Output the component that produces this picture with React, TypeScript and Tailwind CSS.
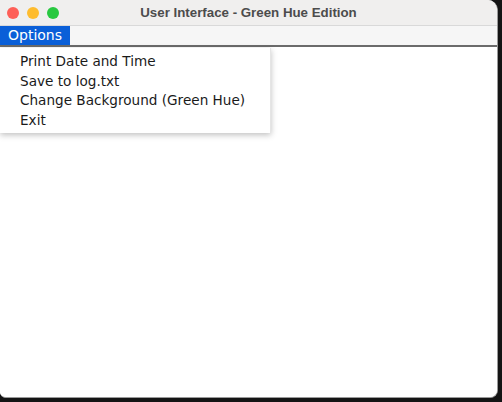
import React from "react";

const items = [
  "Print Date and Time",
  "Save to log.txt",
  "Change Background (Green Hue)",
  "Exit",
];

export default function App() {
  return (
    <div className="w-[502px] h-[402px] bg-[#141414] overflow-hidden">
      <div className="relative w-[498px] h-[398px] bg-white rounded-tr-[10px] rounded-br-[8px] rounded-bl-[6px] overflow-hidden border-r border-b border-[#9a9a9a] flex flex-col">
        {/* title bar */}
        <div className="h-[26px] bg-[#f0efee] border-b border-[#d9d9d9] flex items-center relative shrink-0">
          <div className="flex gap-[8px] pl-[7px]">
            <span className="w-[12px] h-[12px] rounded-full bg-[#fe5f57]" />
            <span className="w-[12px] h-[12px] rounded-full bg-[#febc2e]" />
            <span className="w-[12px] h-[12px] rounded-full bg-[#28c840]" />
          </div>
          <div className="absolute inset-0 flex items-center justify-center text-[13.3px] font-bold text-[#4c4c4c] font-['Liberation_Sans',sans-serif]">
            User Interface - Green Hue Edition
          </div>
        </div>
        {/* menu bar */}
        <div className="h-[21px] bg-[#f6f6f6] border-b-2 border-[#6b6b6b] flex shrink-0">
          <div className="bg-[#0a5fd8] text-white text-[14px] px-[8px] flex items-center font-['DejaVu_Sans',sans-serif]">
            Options
          </div>
        </div>
        <div className="flex-1 bg-white" />
        {/* dropdown menu */}
        <div className="absolute left-0 top-[48px] w-[271px] bg-white shadow-[0_2px_6px_rgba(0,0,0,0.25)] border-r border-[#e5e5e5] pt-[4px] pb-[3px] font-['DejaVu_Sans',sans-serif] text-[13.6px] text-[#1a1a1a]">
          {items.map((t) => (
            <div key={t} className="pl-[20px] h-[19.5px] leading-[19.5px]">
              {t}
            </div>
          ))}
        </div>
      </div>
    </div>
  );
}
